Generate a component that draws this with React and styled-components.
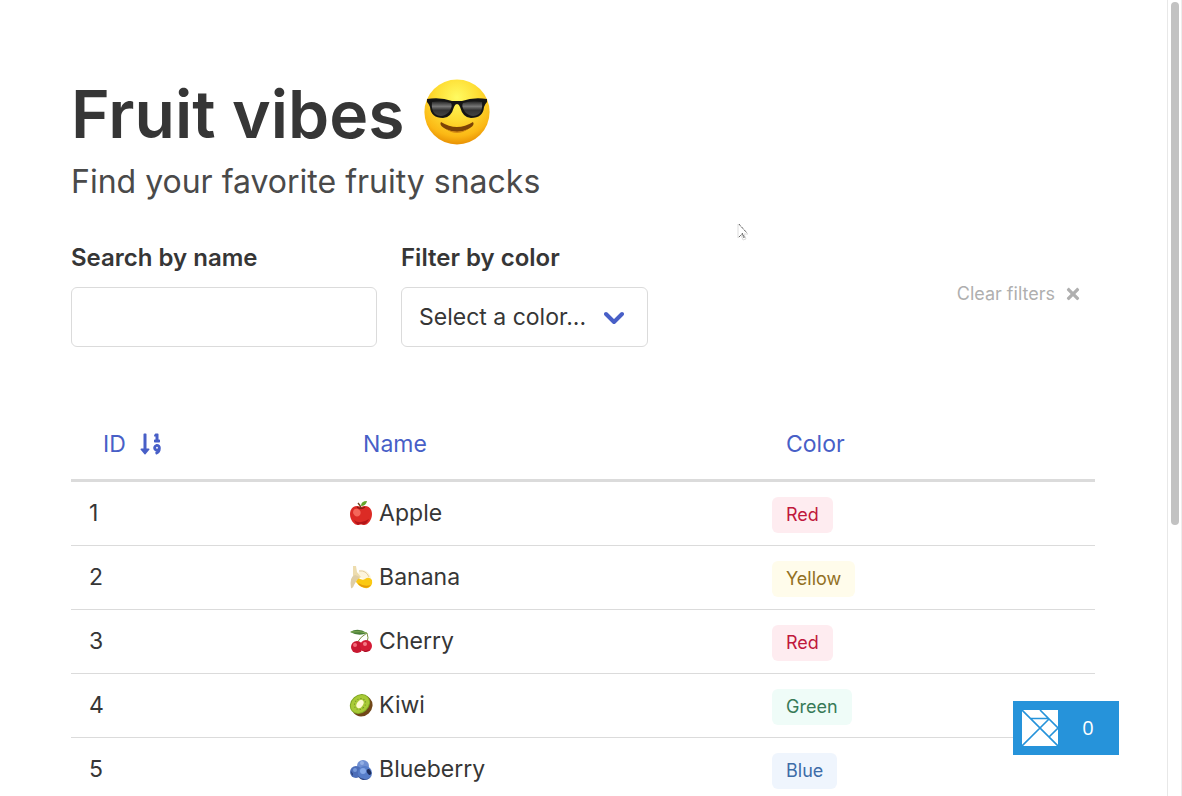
import React, { useState } from "react";
import styled, { createGlobalStyle } from "styled-components";
import { FaSortNumericDown, FaTimes } from "react-icons/fa";

const GlobalStyle = createGlobalStyle`
  * { box-sizing: border-box; }
  html, body { margin: 0; background: #fff; }
  body, button, input, select {
    font-family: Inter, "Liberation Sans", sans-serif;
    font-size: 23px;
    line-height: 36px;
    color: #363636;
  }
  h1, p { margin: 0; }
`;

const Window = styled.div`
  display: flex;
  height: 100vh;
  overflow: hidden;
`;

const Page = styled.main`
  flex: 1;
  min-width: 0;
  height: 100%;
  overflow: hidden;
  padding: 72px 72px 0 71px;
`;

const ScrollTrack = styled.div`
  flex: none;
  width: 15px;
  padding: 2px 2px 2px 3px;
  border-left: 1px solid #e8e8e8;
  border-right: 1px solid #ededed;
`;

const ScrollThumb = styled.div`
  width: 8px;
  height: 66%;
  border-radius: 4px;
  background: #c2c2c2;
`;

const Title = styled.h1`
  display: flex;
  align-items: center;
  gap: 18px;
  font-size: 66px;
  font-weight: 600;
  line-height: 84px;

  svg {
    margin-bottom: 4px;
  }
`;

const Subtitle = styled.p`
  margin-top: 4px;
  font-size: 32px;
  line-height: 44px;
  color: #4a4a4a;
`;

const Filters = styled.form`
  display: flex;
  align-items: flex-start;
  gap: 24px;
  margin: 36px 0 60px;
`;

const Field = styled.div`
  display: flex;
  flex-direction: column;
  gap: 11px;
`;

const Label = styled.label`
  font-size: 24px;
  font-weight: 600;
  line-height: 36px;
`;

const SearchInput = styled.input`
  width: 306px;
  height: 60px;
  padding: 0 17px;
  border: 1px solid #dbdbdb;
  border-radius: 6px;
  background: #fff;
`;

const SelectBox = styled.div`
  position: relative;

  svg {
    position: absolute;
    right: 24px;
    top: 24px;
    pointer-events: none;
  }
`;

const Select = styled.select`
  appearance: none;
  display: block;
  width: 247px;
  height: 60px;
  padding: 0 56px 0 17px;
  border: 1px solid #dbdbdb;
  border-radius: 6px;
  background: #fff;
`;

const ClearButton = styled.button`
  display: flex;
  align-items: center;
  gap: 9px;
  margin: 36px 0 0 auto;
  padding: 0 13px;
  border: 0;
  background: none;
  font-size: 18px;
  color: #afafaf;
`;

const Table = styled.table`
  width: 100%;
  table-layout: fixed;
  border-collapse: separate;
  border-spacing: 0;
`;

const HeadCell = styled.th`
  width: ${(p) => p.$width};
  padding: 13px 18px 11px;
  border-bottom: 3px solid #dbdbdb;
  text-align: left;
  font-weight: 400;
`;

const SortButton = styled.button`
  display: flex;
  align-items: center;
  gap: 13px;
  height: 48px;
  padding: 0 14px;
  border: 0;
  background: none;
  color: #485fc7;
`;

const Cell = styled.td`
  height: 64px;
  padding: ${(p) => (p.$tag ? "15px 18px 12px" : "13px 18px 14px")};
  border-bottom: 1px solid #dbdbdb;
  vertical-align: top;
`;

const FruitName = styled.span`
  display: flex;
  align-items: center;
  gap: 6px;
`;

const tagColors = {
  Red: ["#feecf0", "#c0183c"],
  Yellow: ["#fffceb", "#927023"],
  Green: ["#effcf8", "#377a57"],
  Blue: ["#eff5fd", "#3d6ca8"],
};

const Tag = styled.span`
  display: block;
  width: fit-content;
  height: 36px;
  padding: 0 14px;
  border-radius: 6px;
  font-size: 18px;
  background: ${(p) => tagColors[p.$color][0]};
  color: ${(p) => tagColors[p.$color][1]};
`;

const Debugger = styled.button`
  position: fixed;
  right: 63px;
  bottom: 41px;
  display: flex;
  align-items: center;
  width: 106px;
  height: 54px;
  padding: 0 9px;
  border: 0;
  background: #2693da;
  color: #fff;
  font-size: 20px;

  span {
    flex: 1;
    padding-left: 8px;
    text-align: center;
    font-family: "Open Sans", sans-serif;
  }
`;

const Pointer = styled.svg`
  position: absolute;
  left: 736px;
  top: 222px;
  pointer-events: none;
`;

function CoolFace() {
  return (
    <svg width="68" height="68" viewBox="0 0 68 68" role="img" aria-label="Smiling face with sunglasses">
      <defs>
        <radialGradient id="face" cx="50%" cy="28%" r="74%">
          <stop offset="0" stopColor="#fffb62" />
          <stop offset="0.45" stopColor="#fedd33" />
          <stop offset="0.8" stopColor="#fbb815" />
          <stop offset="1" stopColor="#e58a00" />
        </radialGradient>
        <linearGradient id="lens" x1="0" y1="0" x2="0" y2="1">
          <stop offset="0" stopColor="#222" />
          <stop offset="0.35" stopColor="#777" />
          <stop offset="0.6" stopColor="#333" />
          <stop offset="1" stopColor="#444" />
        </linearGradient>
      </defs>
      <circle cx="34" cy="34" r="32.6" fill="url(#face)" />
      <path d="M18 44Q26 49 34 49T50 44Q52 47 47 50Q41 54 34 54T21 50Q16 47 18 44Z" fill="#7c4306" />
      <path d="M23 51Q34 56 45 51Q40 55 34 55T23 51Z" fill="#d58a14" />
      <path d="M4 21Q18 19 29 23H39Q50 19 64 21V24Q62 26 61 29Q60 40 48 40Q40 40 37 29Q36 26 34 26T31 29Q28 40 20 40Q8 40 7 29Q6 26 4 24Z" fill="#151515" />
      <path d="M9 24Q19 22 28 25Q30 28 26 34Q19 41 12 36Q8 32 9 24Z" fill="url(#lens)" />
      <path d="M59 24Q49 22 40 25Q38 28 42 34Q49 41 56 36Q60 32 59 24Z" fill="url(#lens)" />
    </svg>
  );
}

const fruitDrawings = {
  Apple: (
    <>
      <path d="M12 6C6 3 1 7 1 13C1 19 5 24 9 24Q12 23 15 24C19 24 23 19 23 13C23 7 18 3 12 6Z" fill="#dc2b25" />
      <path d="M4 12Q4 7 9 8Q13 10 11 14Q7 18 4 12Z" fill="#f4675a" />
      <path d="M5 19Q11 24 20 18Q17 24 14 23.500Q12 22 9 24Q7 23 5 19Z" fill="#b21519" />
      <path d="M8 6Q12 9 16 6" stroke="#8d1712" strokeWidth="1.300" fill="none" />
      <path d="M12 7Q11 4 9 2" stroke="#6b421b" strokeWidth="1.500" fill="none" />
      <path d="M12 5Q12 0 18 0Q17 5 12 5Z" fill="#63a52b" />
    </>
  ),
  Banana: (
    <>
      <path d="M10 5Q17 4 21 10Q23 14 22 17L15 14L9 12Z" fill="#fdf4dc" />
      <path d="M8 12Q13 16 16 14Q20 11 23 15Q24 21 19 23Q12 24 7 17Z" fill="#fbc912" />
      <path d="M9 18Q15 22 22 20Q19 24 14 22Q10 21 9 18Z" fill="#e69c09" />
      <path d="M4 1L7 1L8 7L12 12L8 14L4 11Z" fill="#eddcae" />
      <path d="M6 10Q0 12 2 23Q4 24 5 20L8 15L11 12Z" fill="#dfcea6" />
      <path d="M10 6Q17 5 20 12" stroke="#e3cda0" strokeWidth="1" fill="none" />
    </>
  ),
  Cherry: (
    <>
      <path d="M18 4Q12 7 7 15M18 4Q20 9 18 13" stroke="#7d9140" strokeWidth="1" fill="none" />
      <path d="M1 3Q9 -2 18 4Q10 8 1 3Z" fill="#4a7f38" />
      <path d="M2 3Q11 2 18 4" stroke="#83ad55" fill="none" />
      <circle cx="8" cy="18" r="6" fill="#c81831" />
      <circle cx="17" cy="17" r="6" fill="#d41b35" />
      <path d="M12 20Q16 24 21 20Q19 23 16 23Z" fill="#8e0c20" />
      <circle cx="6" cy="16" r="2" fill="#f36a78" />
      <circle cx="16" cy="15" r="2" fill="#f47b86" />
    </>
  ),
  Kiwi: (
    <>
      <ellipse cx="13" cy="13" rx="10" ry="11" transform="rotate(48 13 13)" fill="#714719" />
      <ellipse cx="11" cy="11" rx="9" ry="11" transform="rotate(48 11 11)" fill="#7fa624" />
      <ellipse cx="11" cy="11" rx="8" ry="10" transform="rotate(48 11 11)" fill="#a8ca36" />
      <ellipse cx="11" cy="11" rx="5" ry="6" transform="rotate(48 11 11)" fill="none" stroke="#6d8a2a" strokeWidth="1" strokeDasharray="1 2" />
      <ellipse cx="11" cy="11" rx="3" ry="4.500" transform="rotate(35 11 11)" fill="#fffbd3" />
    </>
  ),
  Blueberry: (
    <>
      <circle cx="14" cy="9" r="6" fill="#6f8fd2" />
      <circle cx="7" cy="15" r="6" fill="#4c6db8" />
      <circle cx="16" cy="16" r="7" fill="#577dc8" />
      <path d="M9 19Q15 25 22 20Q19 23 15 23Q11 23 9 19Z" fill="#2d427d" />
      <ellipse cx="20" cy="15" rx="2" ry="3" transform="rotate(-25 20 15)" fill="#1e2c59" />
      <circle cx="14" cy="14" r="3" fill="#86a9e8" />
      <circle cx="6" cy="13" r="2" fill="#7799d9" />
      <circle cx="13" cy="6" r="2" fill="#93afe5" />
      <path d="M2 14L4 17L3 19Z" fill="#263a70" />
    </>
  ),
};

const fruits = [
  [1, "Apple", "Red"],
  [2, "Banana", "Yellow"],
  [3, "Cherry", "Red"],
  [4, "Kiwi", "Green"],
  [5, "Blueberry", "Blue"],
];

export default function App() {
  const [query, setQuery] = useState("");
  const [color, setColor] = useState("");
  const shown = fruits.filter(
    ([, name, c]) => name.toLowerCase().includes(query.toLowerCase()) && (!color || c === color)
  );
  const clear = () => {
    setQuery("");
    setColor("");
  };

  return (
    <Window>
      <GlobalStyle />
      <Page>
        <Title>
          Fruit vibes <CoolFace />
        </Title>
        <Subtitle>Find your favorite fruity snacks</Subtitle>
        <Filters onSubmit={(e) => e.preventDefault()}>
          <Field>
            <Label htmlFor="search">Search by name</Label>
            <SearchInput id="search" value={query} onChange={(e) => setQuery(e.target.value)} />
          </Field>
          <Field>
            <Label htmlFor="color">Filter by color</Label>
            <SelectBox>
              <Select id="color" value={color} onChange={(e) => setColor(e.target.value)}>
                <option value="">Select a color...</option>
                {Object.keys(tagColors).map((c) => (
                  <option key={c}>{c}</option>
                ))}
              </Select>
              <svg width="20" height="15" viewBox="0 0 20 15" aria-hidden="true">
                <path d="M2 3L10 11L18 3" fill="none" stroke="#485fc7" strokeWidth="4" strokeLinecap="round" strokeLinejoin="round" />
              </svg>
            </SelectBox>
          </Field>
          <ClearButton type="button" onClick={clear}>
            Clear filters <FaTimes size={18} />
          </ClearButton>
        </Filters>
        <Table>
          <thead>
            <tr>
              <HeadCell $width="25.4%">
                <SortButton>
                  ID <FaSortNumericDown size={24} />
                </SortButton>
              </HeadCell>
              <HeadCell $width="41.3%">
                <SortButton>Name</SortButton>
              </HeadCell>
              <HeadCell $width="33.3%">
                <SortButton>Color</SortButton>
              </HeadCell>
            </tr>
          </thead>
          <tbody>
            {shown.map(([id, name, c]) => (
              <tr key={id}>
                <Cell>{id}</Cell>
                <Cell>
                  <FruitName>
                    <svg width="24" height="24" viewBox="0 0 24 24" aria-hidden="true">
                      {fruitDrawings[name]}
                    </svg>
                    {name}
                  </FruitName>
                </Cell>
                <Cell $tag>
                  <Tag $color={c}>{c}</Tag>
                </Cell>
              </tr>
            ))}
          </tbody>
        </Table>
      </Page>
      <ScrollTrack aria-hidden="true">
        <ScrollThumb />
      </ScrollTrack>
      <Debugger>
        <svg width="36" height="36" viewBox="0 0 36 36" aria-hidden="true">
          <path d="M0 0H36V36H0Z" fill="#fff" />
          <path d="M0 0L36 36M0 36L27 9M18 0L36 18L27 27M9 8.500H27" fill="none" stroke="#2693da" strokeWidth="1.600" />
        </svg>
        <span>0</span>
      </Debugger>
      <Pointer width="14" height="20" viewBox="0 0 14 20" aria-hidden="true">
        <path d="M2 2V16L5 13L7 18L10 17L8 12H12Z" fill="#fff" stroke="#ddd" strokeWidth="1" />
        <path d="M3 2L11 11M3 15L6 12L8 16M6 11L9 16" fill="none" stroke="#333" strokeWidth="1" strokeDasharray="1 1" />
      </Pointer>
    </Window>
  );
}
